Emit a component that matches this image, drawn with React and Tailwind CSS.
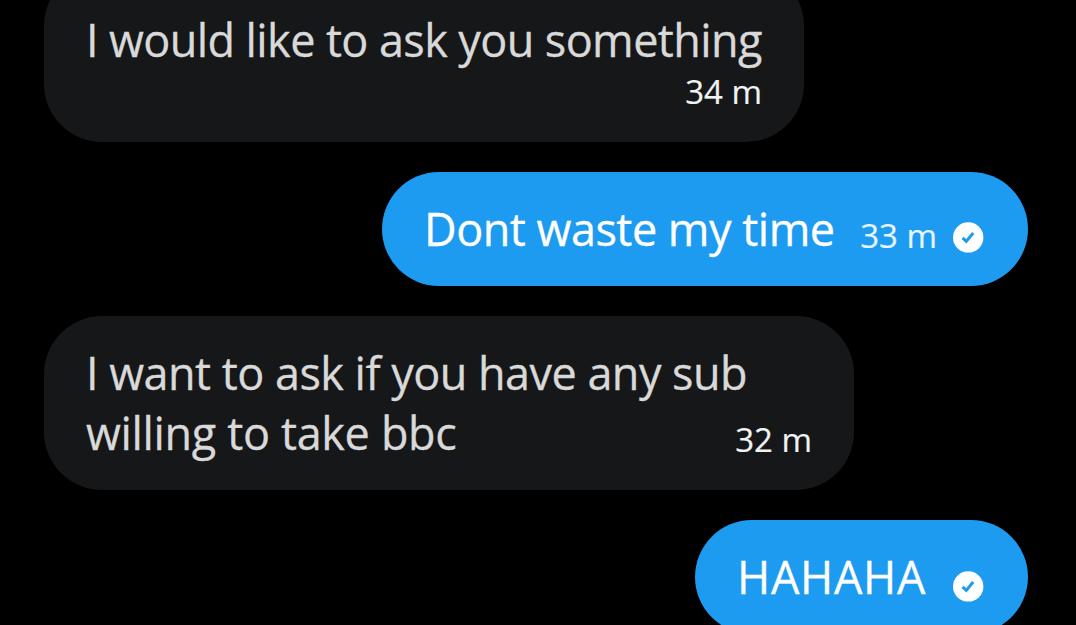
const messages = [
  {
    id: 1,
    sent: false,
    lines: [{ text: 'I would like to ask you something', tracking: 'tracking-[-0.6px]' }],
    time: '34 m',
    size: 'w-[760px] h-[174px] -mt-8 pt-[42px]',
    layout: 'flex-col',
    timeClass: 'self-end mt-[-2px]',
  },
  {
    id: 2,
    sent: true,
    lines: [{ text: 'Dont waste my time', tracking: 'tracking-[-0.5px]' }],
    time: '33 m',
    size: 'w-[646px] h-[114px] mt-[30px] pt-[27px]',
    layout: 'justify-between',
    timeClass: 'mt-[13px]',
  },
  {
    id: 3,
    sent: false,
    lines: [
      { text: 'I want to ask if you have any sub', tracking: 'tracking-[-0.53px]' },
      { text: 'willing to take bbc', tracking: 'tracking-[-0.35px]' },
    ],
    time: '32 m',
    size: 'w-[810px] h-[174px] mt-[30px] pt-[27px]',
    layout: 'justify-between',
    timeClass: 'self-start mt-[73px] -ml-5',
  },
  {
    id: 4,
    sent: true,
    lines: [{ text: 'HAHAHA', tracking: 'tracking-[0.7px]' }],
    size: 'w-[333px] h-[114px] mt-[30px] pt-[27px]',
    layout: 'justify-between',
    timeClass: 'mt-[14px]',
  },
];

const SentIcon = () => (
  <svg viewBox="0 0 31 31" className="block w-[31px] h-[31px]">
    <circle cx="15.2" cy="15.4" r="15.2" fill="#fff" />
    <path d="M9.6 15.8 L13.3 19.4 L20.2 11" fill="none" stroke="#1d9bf0" strokeWidth="3" />
  </svg>
);

const Message = ({ message }) => {
  const { sent, lines, time, size, layout, timeClass } = message;

  return (
    <div
      className={`flex shrink-0 rounded-[58px] ${size} ${layout} ${
        sent ? 'self-end bg-[#1d9bf0] pl-[42px] pr-[44px]' : 'self-start bg-[#161718] px-[42px]'
      }`}
    >
      <div
        className={`text-[45px] leading-[60px] whitespace-nowrap [-webkit-text-stroke:0.3px] ${
          sent ? 'text-white' : 'text-[#d9d9d9]'
        }`}
      >
        {lines.map((line) => (
          <p key={line.text} className={line.tracking}>{line.text}</p>
        ))}
      </div>
      <div className={`flex items-start gap-[16px] ${timeClass}`}>
        {time && (
          <span
            className={`text-[33px] leading-[48px] whitespace-nowrap [-webkit-text-stroke:0.2px] ${
              sent ? 'text-[#e8f5fe]' : 'text-[#eff3f4]'
            }`}
          >
            {time}
          </span>
        )}
        {sent && (
          <span className="mt-[10px]">
            <SentIcon />
          </span>
        )}
      </div>
    </div>
  );
};

export default function App() {
  return (
    <main className="flex flex-col w-[1076px] h-[625px] overflow-hidden bg-black pl-[44px] pr-[48px] font-['Open_Sans','Noto_Sans',sans-serif]">
      {messages.map((message) => (
        <Message key={message.id} message={message} />
      ))}
    </main>
  );
}
